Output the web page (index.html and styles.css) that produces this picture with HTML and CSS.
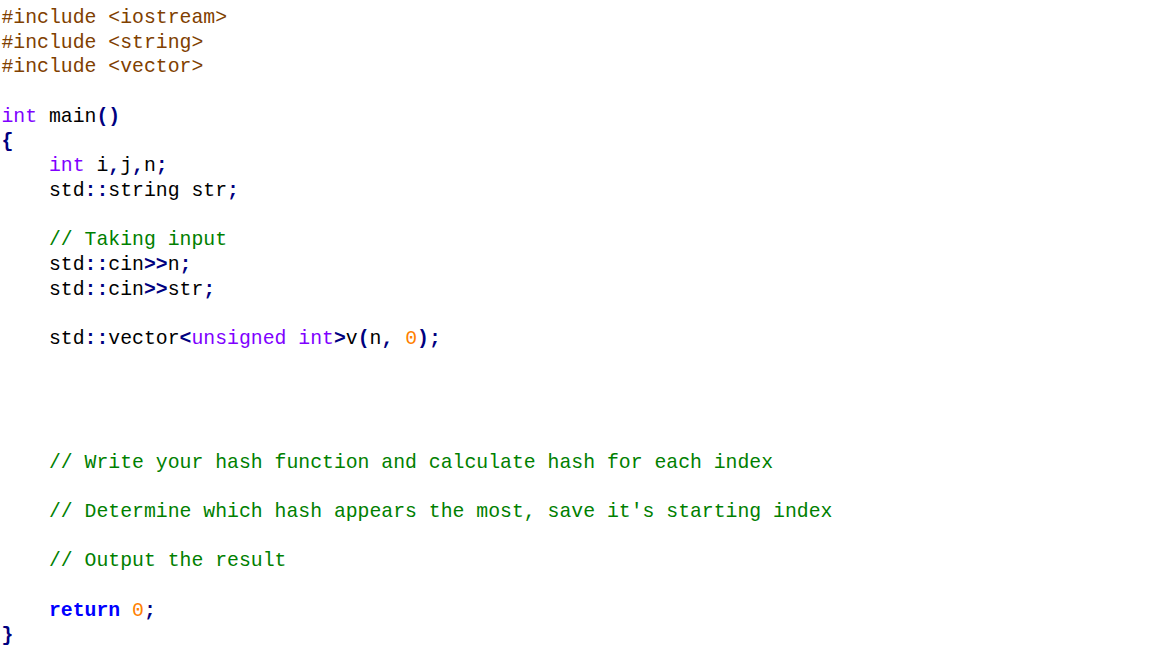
FILE: index.html
```html
<!DOCTYPE html>
<html>
<head>
<meta charset="utf-8">
<link rel="stylesheet" href="styles.css">
</head>
<body>
<pre class="code"><span class="pp">#include &lt;iostream&gt;</span>
<span class="pp">#include &lt;string&gt;</span>
<span class="pp">#include &lt;vector&gt;</span>

<span class="kw">int</span> main<span class="op">()</span>
<span class="op">{</span>
    <span class="kw">int</span> i<span class="op">,</span>j<span class="op">,</span>n<span class="op">;</span>
    std<span class="op">::</span>string str<span class="op">;</span>

    <span class="cm">// Taking input</span>
    std<span class="op">::</span>cin<span class="op">&gt;&gt;</span>n<span class="op">;</span>
    std<span class="op">::</span>cin<span class="op">&gt;&gt;</span>str<span class="op">;</span>

    std<span class="op">::</span>vector<span class="op">&lt;</span><span class="kw">unsigned</span> <span class="kw">int</span><span class="op">&gt;</span>v<span class="op">(</span>n<span class="op">,</span> <span class="num">0</span><span class="op">);</span>




    <span class="cm">// Write your hash function and calculate hash for each index</span>

    <span class="cm">// Determine which hash appears the most, save it's starting index</span>

    <span class="cm">// Output the result</span>

    <span class="ret">return</span> <span class="num">0</span><span class="op">;</span>
<span class="op">}</span>
</pre>
</body>
</html>
```
FILE: styles.css
```css
html, body {
  margin: 0;
  padding: 0;
  background: #ffffff;
}
.code {
  margin: 0;
  padding: 6px 0 0 1.5px;
  font-family: "Liberation Mono", "Courier New", monospace;
  font-size: 19.8px;
  line-height: 24.7px;
  color: #000000;
}
.pp { color: #804000; }
.kw { color: #8000ff; }
.op { color: #000080; font-weight: bold; }
.cm { color: #008000; }
.num { color: #ff8000; }
.ret { color: #0000ff; font-weight: bold; }
```
